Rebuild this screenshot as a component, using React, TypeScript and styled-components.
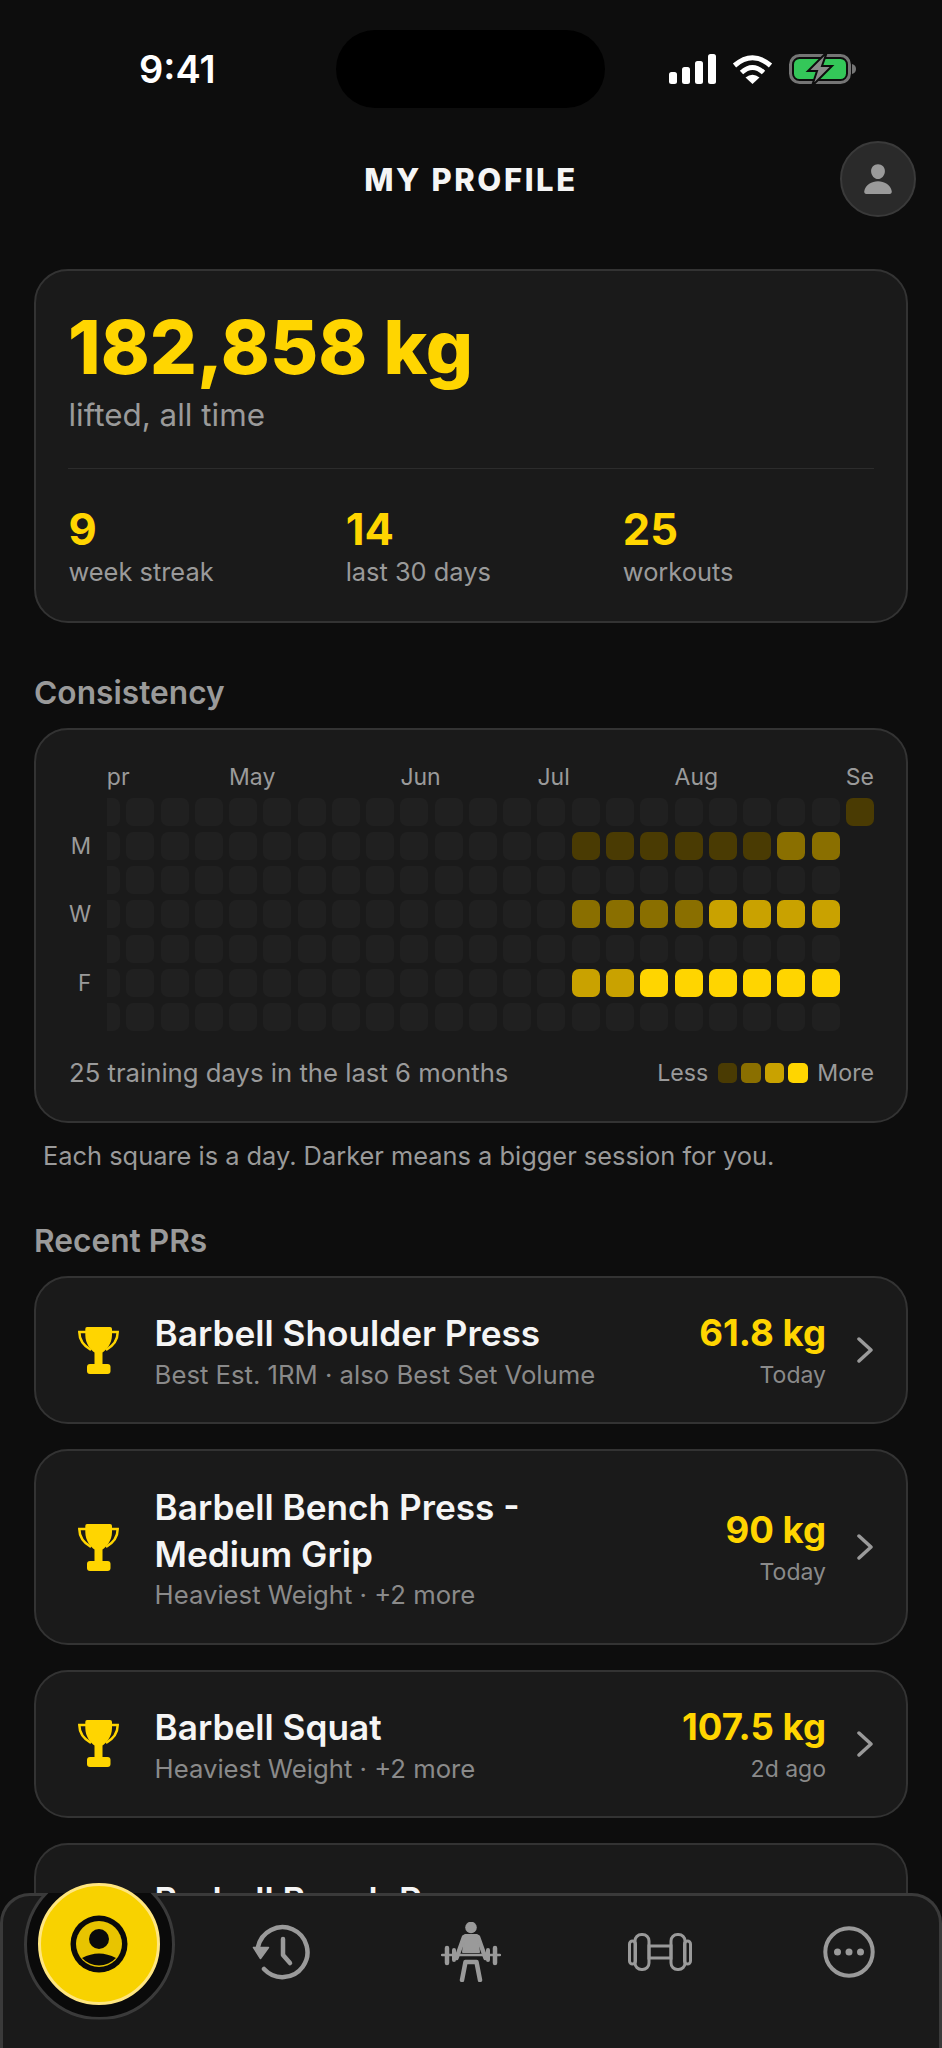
import React from 'react';
import styled, {createGlobalStyle} from 'styled-components';
import {IoPerson} from 'react-icons/io5';

type PrType = {
    title: string
    sub: string
    value: string
    when: string
}

const prs: PrType[] = [
    {title: 'Barbell Shoulder Press', sub: 'Best Est. 1RM · also Best Set Volume', value: '61.8 kg', when: 'Today'},
    {title: 'Barbell Bench Press - Medium Grip', sub: 'Heaviest Weight · +2 more', value: '90 kg', when: 'Today'},
    {title: 'Barbell Squat', sub: 'Heaviest Weight · +2 more', value: '107.5 kg', when: '2d ago'},
    {title: 'Barbell Bench Press - Medium Grip', sub: 'Heaviest Weight', value: '90 kg', when: '3d ago'},
]

const months = [
    {name: 'Apr', col: 1, span: 4},
    {name: 'May', col: 5, span: 5},
    {name: 'Jun', col: 10, span: 4},
    {name: 'Jul', col: 14, span: 4},
    {name: 'Aug', col: 18, span: 5},
    {name: 'Sep', col: 23, span: 1},
]

const dayNames = ['', 'M', '', 'W', '', 'F', '']

// levels per row for the last columns, everything before them is empty
const activeRows: { [row: number]: number[] } = {
    1: [1, 1, 1, 1, 1, 1, 2, 2],
    3: [2, 2, 2, 2, 3, 3, 3, 3],
    5: [3, 3, 4, 4, 4, 4, 4, 4],
}

const getLevel = (row: number, col: number) => {
    if (col === 22) return row === 0 ? 1 : -1
    if (col >= 14 && activeRows[row]) return activeRows[row][col - 14]
    return 0
}

const cells: number[] = []
for (let row = 0; row < 7; row++) {
    for (let col = 0; col < 23; col++) {
        cells.push(getLevel(row, col))
    }
}

const SignalIcon = () => (
    <svg width="47" height="30" viewBox="0 0 47 30" fill="#fff">
        <rect x="0" y="18" width="8" height="12" rx="2.5"/>
        <rect x="13" y="13" width="8" height="17" rx="2.5"/>
        <rect x="26" y="7" width="8" height="23" rx="2.5"/>
        <rect x="39" y="0" width="8" height="30" rx="2.5"/>
    </svg>
)

const WifiIcon = () => (
    <svg width="41" height="30" viewBox="0 0 41 30" fill="none" stroke="#fff" strokeWidth="5">
        <path d="M2.5 11.5 Q20.5 -4 38.5 11.5"/>
        <path d="M9.5 18.5 Q20.5 8.5 31.5 18.5"/>
        <path d="M20.5 30 L13.5 23.5 Q20.5 18 27.5 23.5 Z" fill="#fff" stroke="none"/>
    </svg>
)

const BatteryIcon = () => (
    <svg width="68" height="32" viewBox="0 0 68 32" fill="none">
        <rect x="1.5" y="2.5" width="59" height="27" rx="9" stroke="#757575" strokeWidth="3"/>
        <rect x="5" y="6" width="52" height="20" rx="5.5" fill="#34c759"/>
        <path d="M63 11 Q67 12 67 16 Q67 20 63 21 Z" fill="#757575"/>
        <path d="M38 -1 L19 18 H28 L23 33 L43 13 H33 Z" fill="#8a8a8a" stroke="#0d0d0d" strokeWidth="2"/>
    </svg>
)

const ChevronIcon = () => (
    <svg width="16" height="26" viewBox="0 0 16 26" fill="none" stroke="#9a9a9a" strokeWidth="3.5"
         strokeLinecap="round" strokeLinejoin="round">
        <path d="M2 2 L14 13 L2 24"/>
    </svg>
)

const TrophyIcon = () => (
    <svg width="41" height="47" viewBox="0 0 41 47" fill="#ffd500">
        <path d="M9 0 H32 Q34 0 34 2 V8 C34 17 28 23 24.5 25.5 V37 H16.5 V25.5 C13 23 7.3 17 7.3 8 V2 Q7.3 0 9 0 Z"/>
        <rect x="9" y="37" width="23.5" height="10" rx="3"/>
        <path d="M8 5 H1.3 C1.3 14 6 19 13 23 M33 5 H39.7 C39.7 14 35 19 28 23" fill="none" stroke="#ffd500"
              strokeWidth="2.5"/>
    </svg>
)

const ProfileIcon = () => (
    <svg width="58" height="58" viewBox="-29 -29 58 58">
        <circle r="28.5" fill="#0a0a0a"/>
        <circle r="23" fill="#e8c400"/>
        <circle cx="0" cy="-5" r="10" fill="#0a0a0a"/>
        <path d="M-17 14 Q0 5 17 14 A23 23 0 0 1 -17 14 Z" fill="#0a0a0a"/>
    </svg>
)

const HistoryIcon = () => (
    <svg width="60" height="60" viewBox="0 0 60 60" fill="none" stroke="#9a9a9a" strokeWidth="4.5"
         strokeLinecap="round" strokeLinejoin="round">
        <path d="M6 25 A25 25 0 1 1 12 47"/>
        <path d="M1.5 25.5 H16.5 L8.5 36.5 Z" fill="#9a9a9a" strokeWidth="1.5"/>
        <path d="M31 17 V33 L38 41"/>
    </svg>
)

const LifterIcon = () => (
    <svg width="60" height="60" viewBox="0 0 60 60" fill="none" stroke="#9a9a9a" strokeLinecap="round"
         strokeLinejoin="round">
        <circle cx="30" cy="5.5" r="5.8" fill="#9a9a9a" stroke="none"/>
        <path d="M24 13 H36 L38 30 H22 Z" fill="#9a9a9a" stroke="#9a9a9a" strokeWidth="2"/>
        <path d="M23 15 L15.5 36 M37 15 L44.5 36" strokeWidth="4.5"/>
        <path d="M1 33 H59" strokeWidth="2.5"/>
        <path d="M6 26 V41 M54 26 V41" strokeWidth="4.5"/>
        <path d="M13 28 V38 M47 28 V38" strokeWidth="4"/>
        <path d="M24.5 40 L21 58 M35.5 40 L39 58 M24.5 40 H35.5" strokeWidth="4.5"/>
    </svg>
)

const DumbbellIcon = () => (
    <svg width="64" height="38" viewBox="0 0 64 38" fill="none" stroke="#9a9a9a" strokeWidth="3">
        <rect x="1.5" y="8" width="6" height="23" rx="3"/>
        <rect x="7" y="1.5" width="14" height="35" rx="6.5"/>
        <rect x="21" y="13" width="22" height="12"/>
        <rect x="43" y="1.5" width="14" height="35" rx="6.5"/>
        <rect x="56.5" y="8" width="6" height="23" rx="3"/>
    </svg>
)

const MoreIcon = () => (
    <svg width="60" height="60" viewBox="0 0 60 60" fill="#9a9a9a">
        <circle cx="30" cy="30" r="23.7" fill="none" stroke="#9a9a9a" strokeWidth="4"/>
        <circle cx="18.5" cy="30" r="3.5"/>
        <circle cx="30" cy="30" r="3.5"/>
        <circle cx="41.5" cy="30" r="3.5"/>
    </svg>
)

export default function App() {
    return (
        <Screen>
            <GlobalStyle/>
            <StatusBar>
                <Time>9:41</Time>
                <Island/>
                <StatusIcons>
                    <SignalIcon/>
                    <WifiIcon/>
                    <BatteryIcon/>
                </StatusIcons>
            </StatusBar>

            <Header>
                <span/>
                <PageTitle>MY PROFILE</PageTitle>
                <AvatarButton>
                    <IoPerson size={34} color="#9a9a9a"/>
                </AvatarButton>
            </Header>

            <TotalCard>
                <HeroValue>182,858 kg</HeroValue>
                <HeroLabel>lifted, all time</HeroLabel>
                <Divider/>
                <Stats>
                    <div>
                        <StatValue>9</StatValue>
                        <StatLabel>week streak</StatLabel>
                    </div>
                    <div>
                        <StatValue>14</StatValue>
                        <StatLabel>last 30 days</StatLabel>
                    </div>
                    <div>
                        <StatValue>25</StatValue>
                        <StatLabel>workouts</StatLabel>
                    </div>
                </Stats>
            </TotalCard>

            <SectionTitle>Consistency</SectionTitle>
            <HeatCard>
                <HeatLayout>
                    <DayLabels>
                        {dayNames.map((d, i) => <DayLabel key={i}>{d}</DayLabel>)}
                    </DayLabels>
                    <HeatScroll>
                        <HeatInner>
                            <MonthRow>
                                {months.map(m => (
                                    <MonthLabel key={m.name} $col={m.col} $span={m.span}>{m.name}</MonthLabel>
                                ))}
                            </MonthRow>
                            <HeatGrid>
                                {cells.map((level, i) => <Cell key={i} $level={level}/>)}
                            </HeatGrid>
                        </HeatInner>
                    </HeatScroll>
                </HeatLayout>
                <HeatFooter>
                    <FooterText>25 training days in the last 6 months</FooterText>
                    <Legend>
                        Less
                        <LegendSquares>
                            <LegendSquare $level={1}/>
                            <LegendSquare $level={2}/>
                            <LegendSquare $level={3}/>
                            <LegendSquare $level={4}/>
                        </LegendSquares>
                        More
                    </Legend>
                </HeatFooter>
            </HeatCard>
            <Caption>Each square is a day. Darker means a bigger session for you.</Caption>

            <SectionTitle>Recent PRs</SectionTitle>
            <PrList>
                {prs.map((pr, i) => (
                    <PrCard key={i}>
                        <TrophyBox>
                            <TrophyIcon/>
                        </TrophyBox>
                        <PrText>
                            <PrTitle>{pr.title}</PrTitle>
                            <PrSub>{pr.sub}</PrSub>
                        </PrText>
                        <PrRight>
                            <PrValue>{pr.value}</PrValue>
                            <PrWhen>{pr.when}</PrWhen>
                        </PrRight>
                        <ChevronIcon/>
                    </PrCard>
                ))}
            </PrList>

            <BottomNav>
                <span/>
                <NavItem><HistoryIcon/></NavItem>
                <NavItem><LifterIcon/></NavItem>
                <NavItem><DumbbellIcon/></NavItem>
                <NavItem><MoreIcon/></NavItem>
            </BottomNav>
            <ActiveRing/>
            <ActiveButton>
                <ProfileIcon/>
            </ActiveButton>
        </Screen>
    );
}

const levelColors = ['#202020', '#4a3b03', '#8a6f00', '#c9a200', '#ffd500']

const GlobalStyle = createGlobalStyle`
  html, body {
    margin: 0;
    padding: 0;
    background: #0d0d0d;
  }

  * {
    box-sizing: border-box;
  }
`

const Screen = styled.div`
  position: relative;
  width: 942px;
  height: 2048px;
  overflow: hidden;
  background: #0d0d0d;
  font-family: Inter, "Noto Sans", sans-serif;
  color: #fff;
`

const StatusBar = styled.div`
  display: grid;
  grid-template-columns: 336px 269px 1fr;
  align-items: center;
  padding-top: 30px;
`

const Time = styled.div`
  padding-left: 139px;
  font-size: 38px;
  font-weight: 600;
  line-height: 78px;
`

const Island = styled.div`
  height: 78px;
  border-radius: 39px;
  background: #000;
`

const StatusIcons = styled.div`
  display: flex;
  align-items: center;
  gap: 16px;
  padding-left: 64px;
`

const Header = styled.div`
  display: grid;
  grid-template-columns: 76px 1fr 76px;
  align-items: center;
  margin-top: 33px;
  padding: 0 26px;
`

const PageTitle = styled.div`
  text-align: center;
  font-size: 31px;
  font-weight: 800;
  letter-spacing: 2.6px;
  color: #f5f5f5;
`

const AvatarButton = styled.div`
  display: flex;
  align-items: center;
  justify-content: center;
  width: 76px;
  height: 76px;
  border-radius: 50%;
  background: #2a2a2a;
  border: 2px solid #3a3a3a;
`

const Card = styled.div`
  margin: 0 34px;
  background: #1a1a1a;
  border: 2.4px solid #333;
  border-radius: 34px;
`

const TotalCard = styled(Card)`
  margin-top: 52px;
  padding: 34px 32px 34px 32.5px;
`

const HeroValue = styled.div`
  margin-left: -0.5px;
  font-size: 74px;
  font-weight: 800;
  line-height: 84px;
  color: #ffd500;
`

const HeroLabel = styled.div`
  margin-top: 8px;
  font-size: 31.4px;
  line-height: 36px;
  color: #9a9a9a;
`

const Divider = styled.div`
  height: 1px;
  margin: 35px 0 36px -0.5px;
  background: #2c2c2c;
`

const Stats = styled.div`
  display: grid;
  grid-template-columns: repeat(3, 1fr);
  gap: 26px;
`

const StatValue = styled.div`
  font-size: 43.5px;
  font-weight: 700;
  line-height: 48px;
  color: #ffd500;
`

const StatLabel = styled.div`
  margin-top: 4px;
  font-size: 25.4px;
  line-height: 30px;
  color: #9a9a9a;
`

const SectionTitle = styled.div`
  margin: 52px 34px 17px;
  font-size: 31.7px;
  font-weight: 600;
  line-height: 36px;
  color: #9a9a9a;
`

const HeatCard = styled(Card)`
  padding: 33px 32px 33px 33px;
`

const HeatLayout = styled.div`
  display: flex;
  align-items: flex-end;
`

const DayLabels = styled.div`
  display: grid;
  grid-template-rows: repeat(7, 28px);
  row-gap: 6.27px;
  width: 22px;
  margin-right: 15.6px;
`

const DayLabel = styled.div`
  text-align: right;
  font-size: 22.5px;
  line-height: 28px;
  color: #9a9a9a;
`

const HeatScroll = styled.div`
  flex: 1;
  min-width: 0;
  overflow: hidden;
`

const HeatInner = styled.div`
  width: 782px;
  margin-left: -14.6px;
`

const MonthRow = styled.div`
  display: grid;
  grid-template-columns: repeat(23, 28px);
  column-gap: 6.27px;
  height: 28px;
  margin-bottom: 6.5px;
`

const MonthLabel = styled.div<{ $col: number, $span: number }>`
  grid-column: ${props => props.$col} / span ${props => props.$span};
  font-size: 23px;
  line-height: 28px;
  white-space: nowrap;
  color: #9a9a9a;

  &:first-child {
    margin-left: -1px;
  }
`

const HeatGrid = styled.div`
  display: grid;
  grid-template-columns: repeat(23, 28px);
  grid-auto-rows: 28px;
  gap: 6.27px;
`

const Cell = styled.div<{ $level: number }>`
  border-radius: 7px;
  background: ${props => props.$level < 0 ? 'transparent' : levelColors[props.$level]};
`

const HeatFooter = styled.div`
  display: flex;
  align-items: center;
  justify-content: space-between;
  margin-top: 27px;
`

const FooterText = styled.div`
  font-size: 25.7px;
  line-height: 30px;
  color: #9a9a9a;
`

const Legend = styled.div`
  display: flex;
  align-items: center;
  gap: 9.5px;
  font-size: 23.2px;
  line-height: 30px;
  color: #9a9a9a;
`

const LegendSquares = styled.div`
  display: flex;
  gap: 4px;
`

const LegendSquare = styled.div<{ $level: number }>`
  width: 19.5px;
  height: 19.5px;
  border-radius: 5px;
  background: ${props => levelColors[props.$level]};
`

const Caption = styled.div`
  margin: 18px 34px 0 43px;
  font-size: 25.4px;
  line-height: 30px;
  color: #9a9a9a;
`

const PrList = styled.div`
  display: flex;
  flex-direction: column;
  gap: 25px;
`

const PrCard = styled(Card)`
  display: flex;
  align-items: center;
  padding: 32.4px 33px 32.4px 41.6px;
`

const TrophyBox = styled.div`
  display: flex;
  flex: none;
  width: 41px;
  margin-right: 36px;
`

const PrText = styled.div`
  flex: 1;
  min-width: 0;
`

const PrTitle = styled.div`
  max-width: 460px;
  font-size: 35.2px;
  font-weight: 600;
  line-height: 47px;
  color: #f5f5f5;
`

const PrSub = styled.div`
  margin-top: 2.5px;
  font-size: 25.7px;
  line-height: 30px;
  color: #8a8a8a;
`

const PrRight = styled.div`
  flex: none;
  margin-right: 31px;
  text-align: right;
`

const PrValue = styled.div`
  font-size: 36.6px;
  font-weight: 700;
  line-height: 47px;
  color: #ffd500;
`

const PrWhen = styled.div`
  margin-top: 2.5px;
  font-size: 23px;
  line-height: 30px;
  color: #8a8a8a;
`

const BottomNav = styled.div`
  position: absolute;
  left: 0;
  right: 0;
  bottom: 0;
  display: grid;
  grid-template-columns: repeat(5, 189px);
  justify-content: center;
  height: 155px;
  padding-top: 26px;
  background: #1a1a1a;
  border: 3px solid #3a3a3a;
  border-bottom: 0;
  border-radius: 30px 30px 0 0;
`

const NavItem = styled.div`
  display: flex;
  align-items: center;
  justify-content: center;
  height: 60px;
`

const ActiveRing = styled.div`
  position: absolute;
  left: 24px;
  top: 1868.5px;
  width: 151px;
  height: 151px;
  border-radius: 50%;
  background: #0a0a0a;
  border: 3px solid #3a3a3a;
  clip-path: inset(24.5px 0 0 0);
`

const ActiveButton = styled.div`
  position: absolute;
  left: 38px;
  top: 1883px;
  display: flex;
  align-items: center;
  justify-content: center;
  width: 122px;
  height: 122px;
  border-radius: 50%;
  background: #f8d200;
  border: 3px solid #ffe680;
`
